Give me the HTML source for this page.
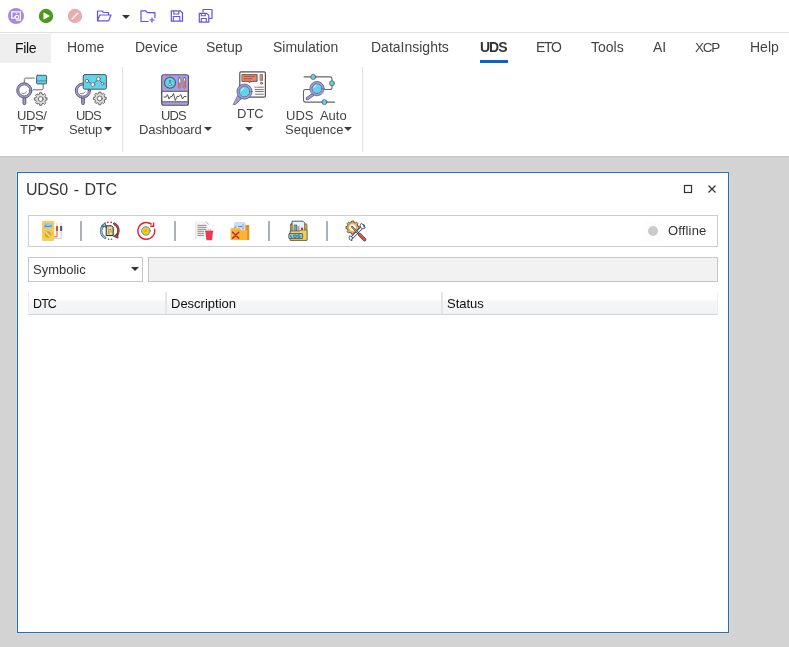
<!DOCTYPE html>
<html><head><meta charset="utf-8">
<style>
*{margin:0;padding:0;box-sizing:border-box}
html,body{width:789px;height:647px;overflow:hidden;background:#fff;font-family:"Liberation Sans",sans-serif;-webkit-font-smoothing:antialiased}
div{will-change:transform}
.abs{position:absolute}
#qat{position:absolute;left:0;top:0;width:789px;height:32px;background:#fff}
#qsep{position:absolute;left:0;top:32px;width:789px;height:1px;background:#e2e0dc}
.tab{position:absolute;top:39px;font-size:14px;color:#444;white-space:nowrap;line-height:16px}
#filebg{position:absolute;left:0;top:34px;width:51px;height:29px;background:#efefef}
#ul{position:absolute;left:480px;top:60px;width:28px;height:3px;background:#0b63c5}
.rl{position:absolute;font-size:13px;color:#444;white-space:nowrap;line-height:14px}
.arr{position:absolute;width:0;height:0;border-left:4px solid transparent;border-right:4px solid transparent;border-top:4px solid #3c3c3c}
.vsep{position:absolute;width:1px;background:#e2e2e2}
#ws{position:absolute;left:0;top:156px;width:789px;height:491px;background:#d3d3d3;border-top:1px solid #c5c3bf}
#win{position:absolute;left:17px;top:172px;width:712px;height:461px;background:#fff;border:1px solid #1b70c6;box-shadow:0 0 0 1px #dcd8d4}
.tb{position:absolute;left:28px;top:215px;width:690px;height:32px;border:1px solid #cdcdcd;background:#fff}
.tsep{position:absolute;top:221px;width:2px;height:20px;background:#a9b1bd}
</style></head><body>
<div id="qat"></div>
<div id="qsep"></div>

<!-- QAT icons -->
<svg class="abs" style="left:0;top:0" width="230" height="32" viewBox="0 0 230 32">
  <circle cx="16" cy="16" r="8" fill="#a58ae0"/>
  <path d="M14.2 18.2 H11.8 V11.8 H20.4 V20.2 H15.8" fill="none" stroke="#fff" stroke-width="1.2" stroke-linejoin="miter" stroke-linecap="butt"/>
  <path d="M14.3 18.4 L15.4 16.3" fill="none" stroke="#fff" stroke-width="1.1"/><circle cx="16.9" cy="17.1" r="1.7" fill="none" stroke="#fff" stroke-width="1.1"/>
  <path d="M16 13.4 H17.3" stroke="#fff" stroke-width="0.9"/>
  <circle cx="46" cy="16" r="7.2" fill="#4b9a1e"/>
  <path d="M43.5 12.3 L50 16 L43.5 19.7 Z" fill="#fff"/>
  <circle cx="75" cy="16" r="7.2" fill="#e9abab"/>
  <path d="M71.8 19.2 L78.2 12.8" stroke="#fff" stroke-width="1.3"/>
  <!-- open folder -->
  <path d="M97.5 20.8 V11 h4.5 l1.5 1.5 h5 v2.5 M97.5 20.8 l2.3 -5.8 h11.2 l-2.3 5.8 z" fill="none" stroke="#6a4fe0" stroke-width="1.2" stroke-linejoin="round"/>
  <path d="M122 15 h8 l-4 4 z" fill="#333"/>
  <!-- new folder -->
  <path d="M148.5 21.5 h-7.5 V10.8 h4.8 l1.6 1.8 h7.5 v5.5" fill="none" stroke="#6a4fe0" stroke-width="1.2" stroke-linejoin="round"/>
  <path d="M152 17.5 v5 M149.5 20 h5" stroke="#6a4fe0" stroke-width="1.2"/>
  <!-- save -->
  <path d="M171.3 10.8 h9 l2.2 2.2 v8.2 h-11.2 z" fill="none" stroke="#6a4fe0" stroke-width="1.2" stroke-linejoin="round"/>
  <path d="M173.8 11 v3 h5 v-3 M173.3 21 v-4.5 h6.5 v4.5" fill="none" stroke="#6a4fe0" stroke-width="1.1"/>
  <!-- save all -->
  <path d="M203 12.5 v-3 h9 v9 h-3" fill="none" stroke="#6a4fe0" stroke-width="1.2" stroke-linejoin="round"/>
  <path d="M199.3 13.3 h7.5 l2 2 v6.8 h-9.5 z" fill="none" stroke="#6a4fe0" stroke-width="1.2" stroke-linejoin="round"/>
  <path d="M201.3 13.5 v2.3 h4 v-2.3 M201.3 22 v-3.5 h5 v3.5" fill="none" stroke="#6a4fe0" stroke-width="1.1"/>
</svg>

<!-- tabs -->
<div id="filebg"></div>
<div class="tab" style="left:15px;top:40px;color:#111;letter-spacing:-0.3px">File</div>
<div class="tab" style="left:67px">Home</div>
<div class="tab" style="left:135px">Device</div>
<div class="tab" style="left:206px">Setup</div>
<div class="tab" style="left:273px">Simulation</div>
<div class="tab" style="left:371px">DataInsights</div>
<div class="tab" style="left:480px;font-weight:bold;color:#333;letter-spacing:-1px">UDS</div>
<div class="tab" style="left:536px;letter-spacing:-1.3px">ETO</div>
<div class="tab" style="left:591px">Tools</div>
<div class="tab" style="left:653px">AI</div>
<div class="tab" style="left:695px;font-size:13.5px;top:39.5px;letter-spacing:-1.2px">XCP</div>
<div class="tab" style="left:750px">Help</div>
<div id="ul"></div>

<!-- ribbon -->
<div class="vsep" style="left:122px;top:67px;height:85px"></div>
<div class="vsep" style="left:362px;top:67px;height:85px"></div>

<div class="rl" style="left:17px;top:109px;letter-spacing:-0.4px">UDS/</div>
<div class="rl" style="left:20px;top:123px">TP</div>
<div class="arr" style="left:36px;top:127px"></div>

<div class="rl" style="left:75.5px;top:109px;letter-spacing:-0.9px">UDS</div>
<div class="rl" style="left:69px;top:123px;letter-spacing:-0.2px">Setup</div>
<div class="arr" style="left:104px;top:127px"></div>

<div class="rl" style="left:160.5px;top:109px;letter-spacing:-0.9px">UDS</div>
<div class="rl" style="left:139px;top:123px;letter-spacing:-0.1px">Dashboard</div>
<div class="arr" style="left:204px;top:127px"></div>

<div class="rl" style="left:237px;top:107px">DTC</div>
<div class="arr" style="left:245px;top:127px"></div>

<div class="rl" style="left:286px;top:109px">UDS&nbsp; Auto</div>
<div class="rl" style="left:285px;top:123px">Sequence</div>
<div class="arr" style="left:344px;top:127px"></div>

<!-- workspace -->
<div id="ws"></div>
<div id="win"></div>
<div class="abs" style="left:26px;top:181px;font-size:16px;color:#383838;word-spacing:1.5px;letter-spacing:-0.2px;line-height:18px;white-space:nowrap">UDS0 - DTC</div>
<svg class="abs" style="left:680px;top:180px" width="45" height="20">
  <rect x="4.5" y="5.5" width="7" height="7" fill="none" stroke="#333" stroke-width="1.2"/>
  <path d="M28.5 5.5 l7 7 M35.5 5.5 l-7 7" stroke="#333" stroke-width="1.2"/>
</svg>

<div class="tb"></div>
<div class="tsep" style="left:80px"></div>
<div class="tsep" style="left:174px"></div>
<div class="tsep" style="left:268px"></div>
<div class="tsep" style="left:326px"></div>
<div class="abs" style="left:643px;top:221px;width:20px;height:20px;background:#fdfdfd"></div><svg class="abs" style="left:642px;top:222px" width="20" height="20"><circle cx="11" cy="9" r="5" fill="#cbcac9"/></svg>
<div class="abs" style="left:668px;top:224px;font-size:13px;color:#333;line-height:14px;letter-spacing:0.15px">Offline</div>

<!-- combo -->
<div class="abs" style="left:28px;top:257px;width:115px;height:25px;border:1px solid #c6c6c6;background:#fff"></div>
<div class="abs" style="left:33px;top:263px;font-size:13px;color:#333;line-height:14px">Symbolic</div>
<div class="arr" style="left:131px;top:267px;border-top-color:#333;border-width:4px 4px 0 4px"></div>
<div class="abs" style="left:148px;top:257px;width:570px;height:25px;border:1px solid #c6c6c6;background:#f2f2f2"></div>

<!-- header -->
<div class="abs" style="left:28px;top:292px;width:690px;height:23px;background:linear-gradient(#fff 0,#fff 7px,#f5f6f8 10px,#f2f3f5 100%);border-bottom:1px solid #d5d5d5;border-left:1px solid #eee;border-right:1px solid #eee"></div>
<div class="abs" style="left:165px;top:292px;width:2px;height:22px;background:#e6e6e6"></div>
<div class="abs" style="left:441px;top:292px;width:2px;height:22px;background:#e6e6e6"></div>
<div class="abs" style="left:33px;top:297px;font-size:13px;color:#111;line-height:14px;font-size:12.5px;letter-spacing:-0.9px">DTC</div>
<div class="abs" style="left:171px;top:297px;font-size:13px;color:#111;line-height:14px">Description</div>
<div class="abs" style="left:447px;top:297px;font-size:13px;color:#111;line-height:14px">Status</div>


<svg class="abs" style="left:0;top:0" width="789" height="647" viewBox="0 0 789 647">
 <g stroke-linejoin="round" stroke-linecap="round">
  <!-- UDS/TP icon -->
  <path d="M24.3 82.5 V79.6 a1.5 1.5 0 0 1 1.5 -1.5 H34.3" fill="none" stroke="#6a6a6a" stroke-width="1"/>
  <path d="M43.2 84.5 V88.3 a1.5 1.5 0 0 1 -1.5 1.5 H33.5" fill="none" stroke="#6a6a6a" stroke-width="1"/>
  <rect x="36.6" y="75.3" width="10" height="8.6" rx="0.8" fill="#5fd4f0" stroke="#555" stroke-width="1"/>
  <rect x="37.1" y="80.2" width="9" height="1.4" fill="#5b9aa4"/>
  <rect x="23" y="97.5" width="2.8" height="7" rx="1" fill="#a596e6" stroke="#555" stroke-width="0.9"/>
  <circle cx="24.3" cy="90.4" r="6.6" fill="#fff" stroke="#a596e6" stroke-width="2"/>
  <circle cx="24.3" cy="90.4" r="7.6" fill="none" stroke="#555" stroke-width="0.9"/>
  <circle cx="24.3" cy="90.4" r="5.5" fill="none" stroke="#555" stroke-width="0.8"/>
  <path d="M22 93.3 a3.2 3.2 0 0 0 4.5 -1.5" fill="none" stroke="#666" stroke-width="0.8"/>
  <g transform="translate(40.7 99)"><path id="gear" d="M6.31 -1.05 L6.31 1.05 L4.85 1.21 L4.28 2.58 L5.21 3.72 L3.72 5.21 L2.58 4.28 L1.21 4.85 L1.05 6.31 L-1.05 6.31 L-1.21 4.85 L-2.58 4.28 L-3.72 5.21 L-5.21 3.72 L-4.28 2.58 L-4.85 1.21 L-6.31 1.05 L-6.31 -1.05 L-4.85 -1.21 L-4.28 -2.58 L-5.21 -3.72 L-3.72 -5.21 L-2.58 -4.28 L-1.21 -4.85 L-1.05 -6.31 L1.05 -6.31 L1.21 -4.85 L2.58 -4.28 L3.72 -5.21 L5.21 -3.72 L4.28 -2.58 L4.85 -1.21 Z" fill="#dcdcdc" stroke="#5a5a5a" stroke-width="0.9"/><circle r="2.4" fill="#fff" stroke="#5a5a5a" stroke-width="0.9"/></g>

  <!-- UDS Setup icon -->
  <rect x="81.6" y="97.5" width="2.8" height="7" rx="1" fill="#a596e6" stroke="#555" stroke-width="0.9"/>
  <circle cx="82.9" cy="90.6" r="6.6" fill="#fff" stroke="#a596e6" stroke-width="2"/>
  <circle cx="82.9" cy="90.6" r="7.6" fill="none" stroke="#555" stroke-width="0.9"/>
  <circle cx="82.9" cy="90.6" r="5.5" fill="none" stroke="#555" stroke-width="0.8"/>
  <path d="M80.6 93.5 a3.2 3.2 0 0 0 4.5 -1.5" fill="none" stroke="#666" stroke-width="0.8"/>
  <rect x="83.2" y="74.6" width="23.2" height="14.6" rx="1.6" fill="#5fd4f0" stroke="#555" stroke-width="1"/>
  <path d="M87 80.9 L92.9 84.5 L98.4 79 L102.6 83.7" fill="none" stroke="#555" stroke-width="0.8"/>
  <circle cx="87" cy="80.9" r="1.6" fill="#fff" stroke="#555" stroke-width="0.7"/>
  <circle cx="92.9" cy="84.5" r="1.9" fill="#fff" stroke="#555" stroke-width="0.7"/>
  <circle cx="98.4" cy="79" r="1.9" fill="#fff" stroke="#555" stroke-width="0.7"/>
  <circle cx="102.6" cy="83.7" r="1.3" fill="#fff" stroke="#555" stroke-width="0.7"/>
  <g transform="translate(99.8 98.4)"><use href="#gear"/><circle r="2.4" fill="#fff" stroke="#5a5a5a" stroke-width="0.9"/></g>

  <!-- Dashboard icon -->
  <rect x="161.7" y="74.7" width="26.8" height="30.6" rx="2" fill="#a89ce8" stroke="#555" stroke-width="1.1"/>
  <rect x="162.2" y="91.3" width="25.8" height="10.5" fill="#fff" stroke="#555" stroke-width="1"/>
  <g transform="translate(170 82.8)"><circle r="5.5" fill="#5fd4f0" stroke="#555" stroke-width="1.1"/><path d="M0 1.5 V-2.6" stroke="#4a6a78" stroke-width="1.1"/><circle cy="1.6" r="1.3" fill="#fff" stroke="#555" stroke-width="0.6"/></g>
  <rect x="178.6" y="77.7" width="2.2" height="10.4" rx="1" fill="#fff" stroke="#555" stroke-width="0.7"/>
  <rect x="178.8" y="82.5" width="1.8" height="5.5" fill="#ea6f58"/>
  <rect x="183.3" y="77.7" width="2.2" height="10.4" rx="1" fill="#fff" stroke="#555" stroke-width="0.7"/>
  <rect x="183.5" y="80.5" width="1.8" height="7.5" fill="#ea6f58"/>
  <path d="M164 97 H166 L167.5 94.6 L169 99 L170.5 96.5 H172 L173.5 93.5 L175.3 100.5 L177 96.5 H179 L180.8 94.5 L182.5 99 L184 96.5 H186" fill="none" stroke="#444" stroke-width="0.9"/>

  <!-- DTC icon -->
  <rect x="239.8" y="71.9" width="25.6" height="25.2" rx="1.2" fill="#fafafa" stroke="#555" stroke-width="1.2"/>
  <rect x="242.3" y="74.6" width="14.8" height="6.8" fill="#f08068" stroke="#555" stroke-width="0.9"/>
  <path d="M248.3 81.4 L249.6 83 L250.9 81.4" fill="#f08068" stroke="#555" stroke-width="0.7"/>
  <path d="M244 76.5 H246 M247 76.5 H254.5 M244 78.7 H252" stroke="#7a3a30" stroke-width="0.6"/>
  <rect x="260.5" y="74.6" width="2" height="5.8" fill="#f08068" stroke="#555" stroke-width="0.7"/>
  <circle cx="261.5" cy="83.2" r="1.1" fill="#f08068" stroke="#555" stroke-width="0.6"/>
  <path d="M255 87.2 H256.3 M257.5 87.2 H263.3 M255 89.6 H263.3 M255.5 91.5 H263.3 M255.5 94.2 H263.3" stroke="#555" stroke-width="0.8"/>
  <path d="M238 95.6 L241.6 98.6 L235.2 104.6 L233.6 104.6 Z" fill="#a596e6" stroke="#555" stroke-width="0.7"/>
  <circle cx="244.5" cy="91.6" r="6.6" fill="#62d2ee" stroke="#a596e6" stroke-width="2"/>
  <circle cx="244.5" cy="91.6" r="7.6" fill="none" stroke="#555" stroke-width="0.7"/>
  <circle cx="244.5" cy="91.6" r="5.3" fill="none" stroke="#555" stroke-width="0.6"/>
  <path d="M241.5 90.5 a3.3 3.3 0 0 1 2.2 -2.4" fill="none" stroke="#fff" stroke-width="0.9"/>

  <!-- UDS Auto Sequence icon -->
  <path d="M304.1 76.9 H330 a2 2 0 0 1 2 2 V87.5 a2 2 0 0 1 -2 2 H324.7" fill="none" stroke="#666" stroke-width="1.1"/>
  <path d="M309.4 89.5 H305.5 a2 2 0 0 0 -2 2 V100.1 a2 2 0 0 0 2 2 H334.6" fill="none" stroke="#666" stroke-width="1.1"/>
  <circle cx="313.2" cy="76.9" r="2.5" fill="#5fd4f0" stroke="#555" stroke-width="0.8"/>
  <circle cx="332" cy="83.3" r="2.5" fill="#5fd4f0" stroke="#555" stroke-width="0.8"/>
  <circle cx="324.4" cy="102.1" r="2.5" fill="#5fd4f0" stroke="#555" stroke-width="0.8"/>
  <path d="M312.6 94.8 L307.3 98.6" stroke="#555" stroke-width="3.2"/>
  <path d="M312.6 94.8 L307.3 98.6" stroke="#a596e6" stroke-width="2"/>
  <circle cx="317" cy="88.6" r="6.1" fill="#62d2ee" stroke="#a596e6" stroke-width="2"/>
  <circle cx="317" cy="88.6" r="7.2" fill="none" stroke="#555" stroke-width="0.7"/>
  <circle cx="317" cy="88.6" r="4.9" fill="none" stroke="#555" stroke-width="0.6"/>
  <path d="M314 87.5 a3.2 3.2 0 0 1 2.2 -2.4" fill="none" stroke="#fff" stroke-width="0.9"/>
 </g>
</svg>

<svg class="abs" style="left:0;top:0" width="789" height="647" viewBox="0 0 789 647">
 <g stroke-linejoin="round" stroke-linecap="round">
  <!-- multimeter -->
  <path d="M53.5 236.8 H57 V231 M53.5 238.3 H61.1 V231" fill="none" stroke="#c8d0d8" stroke-width="1.1"/>
  <path d="M54 236.8 H57 V231" fill="none" stroke="#e07060" stroke-width="0.9"/>
  <rect x="56" y="222.8" width="2.1" height="3.4" fill="#e8e8e8"/>
  <rect x="56" y="226" width="2.1" height="5" fill="#e8453a"/>
  <rect x="60.1" y="222.8" width="2.1" height="3.4" fill="#e8e8e8"/>
  <rect x="60.1" y="226" width="2.1" height="5" fill="#3e5c6c"/>
  <rect x="42" y="220.8" width="12.3" height="20.1" rx="1.5" fill="#f5d050"/>
  <rect x="44" y="223" width="8.3" height="5.2" fill="#9ccbe8"/>
  <path d="M45 227 l1 -2 M46.8 226.5 h2 M49.5 226 h2" stroke="#3a78c8" stroke-width="0.9"/>
  <circle cx="48" cy="234.5" r="3.2" fill="#d6a83a"/>
  <path d="M46.2 232.7 L49.8 236.3" stroke="#f8e8b0" stroke-width="1.2"/>
  <g fill="#e8a838"><circle cx="43.6" cy="233" r="0.5"/><circle cx="52.4" cy="233" r="0.5"/><circle cx="45" cy="230.5" r="0.5"/><circle cx="51" cy="230.5" r="0.5"/><circle cx="48" cy="229.8" r="0.5"/></g>

  <!-- sync doc -->
  <path d="M105.2 237.8 A7.6 7.6 0 0 1 104.2 225" fill="none" stroke="#3a4a5a" stroke-width="2.3"/>
  <path d="M105.2 237.8 A7.6 7.6 0 0 1 104.2 225" fill="none" stroke="#78bce4" stroke-width="1.4"/>
  <path d="M101.8 225.6 L105.2 222.6 L106 226.8 Z" fill="#78bce4" stroke="#333" stroke-width="0.7"/>
  <path d="M114.2 223.6 A7.6 7.6 0 0 1 116 236" fill="none" stroke="#4a2a2a" stroke-width="2.3"/>
  <path d="M114.2 223.6 A7.6 7.6 0 0 1 116 236" fill="none" stroke="#e03232" stroke-width="1.4"/>
  <path d="M113.8 236.5 L118.2 238.2 L117.6 234 Z" fill="#e03232" stroke="#333" stroke-width="0.7"/>
  <path d="M106.6 225.8 H111.6 L113.2 227.4 V235.6 H106.6 Z" fill="#e4d494" stroke="#222" stroke-width="1"/>
  <path d="M108.6 234 V229.5 H111 V232 H109.8" fill="none" stroke="#8a7a40" stroke-width="0.6"/>
  <circle cx="107.8" cy="222.4" r="0.8" fill="#b02020"/><circle cx="111.2" cy="222.4" r="0.8" fill="#b02020"/>
  <circle cx="108.6" cy="239.2" r="0.8" fill="#2a6090"/><circle cx="111.6" cy="239.2" r="0.8" fill="#2a6090"/>

  <!-- target refresh -->
  <path d="M154.4 228.7 A8.4 8.4 0 1 1 151.6 224.4" fill="none" stroke="#e8202a" stroke-width="1.4" stroke-linecap="butt"/>
  <path d="M150.2 226.2 L153.6 226.2 L153.6 222.6" fill="none" stroke="#e8202a" stroke-width="1.4" stroke-linecap="butt" stroke-linejoin="miter"/>
  <circle cx="145.9" cy="230.9" r="4.3" fill="#ffcc00" stroke="#4a90e8" stroke-width="1"/>
  <rect x="145.3" y="228.6" width="1.2" height="1.6" fill="#b8c040"/>
  <rect x="143.6" y="230.3" width="1.4" height="1.3" fill="#f0a030"/>
  <rect x="145.3" y="230.3" width="1.3" height="1.3" fill="#988f78"/>

  <!-- doc with bin -->
  <path d="M195.2 221.6 H206.2 L208.6 224 V238.8 H195.2 Z" fill="#f4f4f4"/>
  <path d="M195.6 221.8 V238.6" stroke="#e2e2e2" stroke-width="0.8"/>
  <path d="M206.2 221.8 L208.4 224.2" stroke="#a0a0a0" stroke-width="0.8"/>
  <path d="M197.8 225.4 H206 M197.8 227.4 H206 M197.8 229.4 H206 M197.8 231.3 H203.6 M197.8 233.3 H203.6 M197.8 235.4 H203.6" stroke="#7a706c" stroke-width="0.8"/>
  <path d="M205.4 231.2 H213 L212 240.2 H206.4 Z" fill="#ea3a50"/>
  <path d="M205.4 231.2 H213" stroke="#d02840" stroke-width="1"/>
  <path d="M208.5 229.6 l0.5 1.2 M210.5 229.5 l0.3 1.2" stroke="#f08090" stroke-width="0.8"/>

  <!-- folder with x -->
  <path d="M234.6 222 H244.2 L245.8 223.6 V229.8 H232.8 Z" fill="#cfdcf2"/>
  <path d="M236 226.5 l-1.2 1.2 M238.6 226.6 h3" stroke="#3a78c8" stroke-width="0.9"/>
  <path d="M243 224.2 V229.4" stroke="#8aa4d4" stroke-width="1"/>
  <rect x="245.4" y="225" width="3.8" height="15" fill="#ea8a22"/>
  <path d="M230.6 228.2 H240 L241.2 230.2 H247.2 V240.1 H230.6 Z" fill="#f8b630"/>
  <path d="M232.6 232.2 L238.7 238.2 M238.7 232.2 L232.6 238.2" stroke="#d01f30" stroke-width="1.6"/>

  <!-- LOG folder -->
  <rect x="290.4" y="224" width="16.6" height="16.4" rx="0.8" fill="#f2c444" stroke="#333" stroke-width="0.6"/>
  <path d="M292.4 221.2 H303 L304.8 223 V231.4 H292.4 Z" fill="#eaf2fa" stroke="#333" stroke-width="0.8"/>
  <rect x="294.4" y="225" width="2.4" height="7" fill="#58b878" stroke="#222" stroke-width="0.5"/>
  <rect x="297.5" y="226.2" width="2" height="5.8" fill="#b88ce0"/>
  <rect x="301" y="227.6" width="2" height="2.6" fill="#e03040"/>
  <path d="M290.4 231 H300 L301 230 H307 V240.4 H290.4 Z" fill="#f4cd52" stroke="#333" stroke-width="0.5"/>
  <rect x="288.8" y="233.6" width="13.8" height="5" rx="0.6" fill="#88d6f0" stroke="#333" stroke-width="0.7"/>
  <path d="M290.8 235 V237.3 H292.4 M293.8 235 h2.4 v2.3 h-2.4 z M300.2 235 h-2.4 v2.3 h2.4 v-1.1 h-1" fill="none" stroke="#2a4a5a" stroke-width="0.7" stroke-linejoin="miter" stroke-linecap="butt"/>

  <!-- tools -->
  <g transform="translate(352.6 227.6) scale(1.12)">
   <path d="M5.9 -1 L5.9 1 L4.6 1.2 L4.1 2.4 L4.9 3.5 L3.5 4.9 L2.4 4.1 L1.2 4.6 L1 5.9 L-1 5.9 L-1.2 4.6 L-2.4 4.1 L-3.5 4.9 L-4.9 3.5 L-4.1 2.4 L-4.6 1.2 L-5.9 1 L-5.9 -1 L-4.6 -1.2 L-4.1 -2.4 L-4.9 -3.5 L-3.5 -4.9 L-2.4 -4.1 L-1.2 -4.6 L-1 -5.9 L1 -5.9 L1.2 -4.6 L2.4 -4.1 L3.5 -4.9 L4.9 -3.5 L4.1 -2.4 L4.6 -1.2 Z" fill="#f7b040" stroke="#2a3a5a" stroke-width="0.7"/>
   <circle r="2.9" fill="#fff"/>
  </g>
  <path d="M351.5 238.2 L363.5 225.8" stroke="#2a3a5a" stroke-width="3"/>
  <path d="M351.5 238.2 L363.5 225.8" stroke="#fff" stroke-width="1.6"/>
  <path d="M361 223.6 a3 3 0 0 0 3 5 l1.4 -1.2 l-1.6 -0.6 l-0.4 -1.6 z" fill="#fff" stroke="#2a3a5a" stroke-width="0.8"/>
  <path d="M349.5 236 a3 3 0 0 0 2.6 4.6 l-0.6 -1.4 l1.2 -1.2 z" fill="#fff" stroke="#2a3a5a" stroke-width="0.8"/>
  <path d="M351.8 226.6 L359.6 234.6" stroke="#2a3a5a" stroke-width="1.8"/>
  <path d="M351.8 226.6 L359.6 234.6" stroke="#ddd" stroke-width="0.7"/>
  <path d="M359.6 234.6 L364.6 239.6" stroke="#2a3a5a" stroke-width="3.4"/>
  <path d="M359.6 234.6 L364.6 239.6" stroke="#e8503e" stroke-width="2.4"/>
 </g>
</svg>
</body></html>
